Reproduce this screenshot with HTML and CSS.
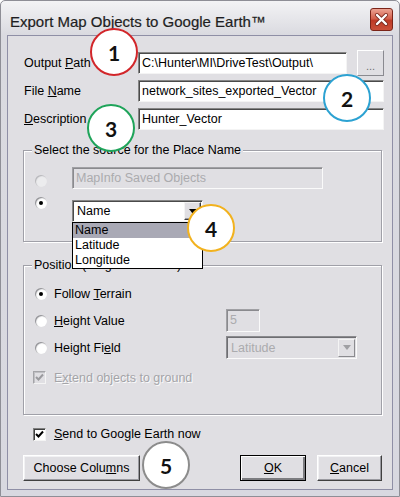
FILE: index.html
```html
<!DOCTYPE html>
<html lang="en">
<head>
    <meta charset="utf-8"/>
    <title>Export Map Objects to Google Earth</title>
    <link rel="stylesheet" href="styles.css">
</head>
<body>
    <div class="window">
        <div class="titlebar">
            <span class="title">Export Map Objects to Google Earth™</span>
            <span class="close">
                <svg width="21" height="21" viewBox="0 0 21 21">
                    <path d="M6 6 L15 15 M15 6 L6 15" stroke="#7a2a20" stroke-width="4" stroke-linecap="round"/>
                    <path d="M6 6 L15 15 M15 6 L6 15" stroke="#ffffff" stroke-width="2.4" stroke-linecap="round"/>
                </svg>
            </span>
        </div>

        <div class="dialog">
            <div class="field-row">
                <label class="field-label">Output <u>P</u>ath</label>
                <div class="textbox">C:\Hunter\MI\DriveTest\Output\</div>
                <button class="btn browse">...</button>
            </div>
            <div class="field-row">
                <label class="field-label">File <u>N</u>ame</label>
                <div class="textbox">network_sites_exported_Vector</div>
            </div>
            <div class="field-row">
                <label class="field-label"><u>D</u>escription</label>
                <div class="textbox">Hunter_Vector</div>
            </div>

            <fieldset class="group source">
                <legend>Select the source for the Place Name</legend>
                <div class="source-row first">
                    <span class="radio disabled"></span>
                    <div class="textbox disabled saved">MapInfo Saved Objects</div>
                </div>
                <div class="source-row second">
                    <span class="radio checked"></span>
                    <div class="combo name-combo">
                        <span class="combo-text">Name</span>
                        <span class="combo-btn">
                            <svg width="8" height="5" viewBox="0 0 8 5"><polygon points="0,0 8,0 4,5" fill="#000"/></svg>
                        </span>
                        <ul class="dropdown">
                            <li class="selected">Name</li>
                            <li>Latitude</li>
                            <li>Longitude</li>
                        </ul>
                    </div>
                </div>
            </fieldset>

            <fieldset class="group position">
                <legend>Position (Height in meters)</legend>
                <div class="position-grid">
                    <div class="option">
                        <span class="radio checked"></span>
                        <span class="option-label">Follow <u>T</u>errain</span>
                    </div>
                    <div></div>
                    <div class="option">
                        <span class="radio"></span>
                        <span class="option-label"><u>H</u>eight Value</span>
                    </div>
                    <div class="textbox disabled height-value">5</div>
                    <div class="option">
                        <span class="radio"></span>
                        <span class="option-label">Height Fi<u>e</u>ld</span>
                    </div>
                    <div class="combo disabled field-combo">
                        <span class="combo-text">Latitude</span>
                        <span class="combo-btn">
                            <svg width="8" height="5" viewBox="0 0 8 5"><polygon points="0,0 8,0 4,5" fill="#a0a0a4"/></svg>
                        </span>
                    </div>
                </div>
                <div class="option extend">
                    <span class="checkbox disabled">
                        <svg width="11" height="11" viewBox="0 0 11 11"><path d="M2 5 L4.5 7.5 L9 2.5" stroke="#9a9a9e" stroke-width="2" fill="none"/></svg>
                    </span>
                    <span class="option-label muted">E<u>x</u>tend objects to ground</span>
                </div>
            </fieldset>

            <div class="option send">
                <span class="checkbox">
                    <svg width="11" height="11" viewBox="0 0 11 11"><path d="M2 5 L4.5 7.5 L9 2.5" stroke="#000" stroke-width="2" fill="none"/></svg>
                </span>
                <span class="option-label"><u>S</u>end to Google Earth now</span>
            </div>

            <div class="button-row">
                <button class="btn columns">Choose Colu<u>m</u>ns</button>
                <div class="button-group">
                    <button class="btn default"><u>O</u>K</button>
                    <button class="btn"><u>C</u>ancel</button>
                </div>
            </div>
        </div>

        <span class="marker red" style="left: 89px; top: 27px;">1</span>
        <span class="marker blue" style="left: 322px; top: 73px;">2</span>
        <span class="marker green" style="left: 86px; top: 103px;">3</span>
        <span class="marker yellow" style="left: 186px; top: 203px;">4</span>
        <span class="marker grey" style="left: 141px; top: 440px;">5</span>
    </div>
</body>
</html>
```

FILE: styles.css
```css
* {
    box-sizing: border-box;
}

body {
    margin: 0;
    background: #ffffff;
    font-family: "Liberation Sans", Arial, sans-serif;
    font-size: 12.5px;
    color: #000;
}

.window {
    position: relative;
    width: 400px;
    height: 497px;
    background: linear-gradient(#f3f3f5, #dadae0 34px, #d8d8e0);
    border: 1px solid #8e8e96;
    border-radius: 5px 5px 0 0;
    display: flex;
    flex-direction: column;
}

/* title bar */
.titlebar {
    height: 34px;
    display: flex;
    justify-content: space-between;
    align-items: flex-start;
    padding: 0 6px 0 9px;
    flex: none;
}

.title {
    margin-top: 12px;
    font-size: 15px;
    line-height: 18px;
    color: #1e1e22;
    -webkit-text-stroke: 0.2px #1e1e22;
}

.close {
    margin-top: 7px;
    width: 23px;
    height: 23px;
    border: 1px solid #7b2418;
    border-radius: 3px;
    background: linear-gradient(#eca393, #d4604c 45%, #be3a26 55%, #c9503a);
    display: flex;
    align-items: center;
    justify-content: center;
}

/* dialog body */
.dialog {
    flex: none;
    height: 455px;
    margin: 0 6px;
    background: #e0dfe3;
    border: 1px solid #8f8fa6;
    padding: 13px 8px 0 15px;
}

.field-row {
    display: flex;
    align-items: center;
    height: 28px;
}

.field-label {
    width: 115px;
    padding-left: 1px;
}

.textbox {
    flex: 1;
    height: 22px;
    line-height: 20px;
    padding: 0 3px;
    background: #fff;
    border: 1px solid;
    border-color: #858585 #f4f4f4 #f4f4f4 #858585;
    box-shadow: inset 1px 1px 0 #4a4a4a;
    white-space: nowrap;
    overflow: hidden;
}

.textbox.disabled {
    background: #e0dfe3;
    color: #ababae;
    border-color: #a0a0a4 #fafafa #fafafa #a0a0a4;
    box-shadow: inset 1px 1px 0 #8a8a8e;
}

/* buttons */
.btn {
    font-family: inherit;
    font-size: 12.5px;
    color: #000;
    height: 26px;
    padding: 0;
    background: #e0dfe3;
    border: 1px solid;
    border-color: #ffffff #404040 #404040 #ffffff;
    box-shadow: inset -1px -1px 0 #9a9aa0, inset 1px 1px 0 #f2f2f4;
}

.btn.browse {
    width: 27px;
    margin-left: 10px;
    color: #707074;
    font-size: 11px;
    padding-top: 5px;
    border-color: #ffffff #8a8a90 #8a8a90 #ffffff;
    box-shadow: none;
}

.btn.default {
    border: 1px solid #000;
    box-shadow: inset 1px 1px 0 #fff, inset -2px -2px 0 #7c7c80;
}

/* group boxes */
.group {
    margin: 9px 2px 0 0;
    padding: 9px 0 19px 11px;
    border: 1px solid #a0a0a8;
    box-shadow: inset 1px 1px 0 #fff, 1px 1px 0 #fff;
}

.group legend {
    padding: 0 2px;
    margin-left: -3px;
    line-height: 16px;
    background: #e0dfe3;
}

.source-row {
    display: flex;
    align-items: flex-start;
}

.source-row.second {
    margin-top: 11px;
}

.source-row.first .radio {
    margin-top: 8px;
}

.source-row.second .radio {
    margin-top: -3px;
}

.saved {
    flex: none;
    width: 251px;
    margin-left: 25px;
}

/* radios and checkboxes */
.radio {
    flex: none;
    width: 12px;
    height: 12px;
    border-radius: 50%;
    background: radial-gradient(circle at 60% 60%, #ffffff 45%, #e6e6ea);
    box-shadow: inset 1px 1px 1px #8c8c90;
    position: relative;
}

.radio.checked::after {
    content: "";
    position: absolute;
    left: 4px;
    top: 4px;
    width: 4px;
    height: 4px;
    border-radius: 50%;
    background: #000;
}

.radio.disabled {
    background: #ececee;
    box-shadow: inset 1px 1px 1px #b4b4b8;
}

.checkbox {
    flex: none;
    width: 13px;
    height: 13px;
    background: #fff;
    border: 1px solid;
    border-color: #808080 #f4f4f4 #f4f4f4 #808080;
    box-shadow: inset 1px 1px 0 #404040;
    display: flex;
    align-items: center;
    justify-content: center;
}

.checkbox.disabled {
    background: #e0dfe3;
    border-color: #a4a4a8 #f4f4f4 #f4f4f4 #a4a4a8;
    box-shadow: inset 1px 1px 0 #c0c0c4;
}

/* combos */
.combo {
    position: relative;
    height: 22px;
    background: #fff;
    border: 1px solid;
    border-color: #858585 #f4f4f4 #f4f4f4 #858585;
    box-shadow: inset 1px 1px 0 #4a4a4a;
    display: flex;
    align-items: center;
}

.name-combo {
    width: 131px;
    margin-left: 25px;
}

.combo-text {
    flex: 1;
    padding-left: 4px;
}

.combo-btn {
    width: 17px;
    height: 18px;
    margin-right: 1px;
    background: #e0dfe3;
    border: 1px solid;
    border-color: #f4f4f4 #404040 #404040 #f4f4f4;
    box-shadow: inset -1px -1px 0 #9a9aa0;
    display: flex;
    align-items: center;
    justify-content: center;
}

.combo.disabled {
    background: #e0dfe3;
    color: #ababae;
    border-color: #8a8a8e #fafafa #fafafa #8a8a8e;
    box-shadow: inset 1px 1px 0 #6e6e72;
}

.combo.disabled .combo-btn {
    border-color: #f4f4f4 #8a8a8e #8a8a8e #f4f4f4;
    box-shadow: none;
}

.dropdown {
    position: absolute;
    top: 21px;
    left: -1px;
    width: 131px;
    margin: 0;
    padding: 0;
    list-style: none;
    background: #fff;
    border: 1px solid #000;
    z-index: 2;
}

.dropdown li {
    height: 15px;
    line-height: 15px;
    padding-left: 2px;
}

.dropdown li.selected {
    background: #a9a9b5;
}

/* position group */
.position-grid {
    display: grid;
    grid-template-columns: 191px 1fr;
    grid-auto-rows: 27px;
    align-items: center;
}

.group.position {
    margin-top: 15px;
    padding-top: 7px;
    padding-bottom: 23px;
}

.option {
    display: flex;
    align-items: center;
}

.option-label {
    margin-left: 7px;
}

.option-label.muted {
    color: #a4a4a8;
    text-shadow: 1px 1px 0 #fbfbfb;
}

.height-value {
    flex: none;
    width: 34px;
    height: 23px;
}

.field-combo {
    width: 131px;
    height: 23px;
}

.option.extend {
    height: 27px;
    margin-top: 3px;
    margin-left: -2px;
}

.option.extend .option-label,
.option.send .option-label {
    margin-left: 8px;
}

.option.send {
    height: 16px;
    margin: 11px 0 0 10px;
}

.button-row {
    display: flex;
    justify-content: space-between;
    margin: 13px 2px 0 0;
}

.btn.columns {
    width: 117px;
}

.button-group {
    display: flex;
    gap: 11px;
}

.button-group .btn {
    width: 65px;
}

.button-group .btn.default {
    width: 66px;
}

/* numbered callouts */
.marker {
    position: absolute;
    width: 48px;
    height: 48px;
    border-radius: 50%;
    background: #fff;
    border: 2px solid;
    display: flex;
    align-items: center;
    justify-content: center;
    font-family: Lato, "Open Sans", sans-serif;
    font-weight: 700;
    font-size: 21px;
    color: #111;
    z-index: 3;
}

.marker.red { border-color: #d2262a; }
.marker.blue { border-color: #2ca2d2; }
.marker.green { border-color: #1fa45a; }
.marker.yellow { border-color: #f2b21e; }
.marker.grey { border-color: #8c8c8c; }
```
